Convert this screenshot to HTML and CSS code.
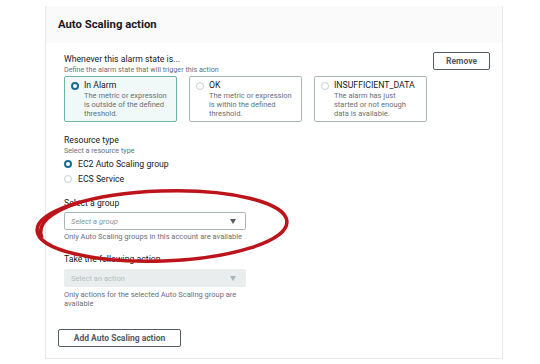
FILE: index.html
```html
<!DOCTYPE html>
<html lang="en">
<head>
    <meta charset="UTF-8">
    <meta name="viewport" content="width=device-width, initial-scale=1.0">
    <title>Auto Scaling action</title>
    <link rel="stylesheet" href="styles.css">
</head>
<body>
    <div class="panel">
        <div class="panel-header">
            <h2>Auto Scaling action</h2>
        </div>
        <div class="panel-body">
            <div class="fields">
                <div class="top-row">
                    <div class="form-group">
                        <div class="label first">Whenever this alarm state is...</div>
                        <div class="desc">Define the alarm state that will trigger this action</div>
                        <div class="cards">
                            <div class="card selected">
                                <span class="radio checked"></span>
                                <div class="card-text">
                                    <div class="card-title">In Alarm</div>
                                    <div class="card-desc">The metric or expression<br>is outside of the defined<br>threshold.</div>
                                </div>
                            </div>
                            <div class="card">
                                <span class="radio"></span>
                                <div class="card-text">
                                    <div class="card-title">OK</div>
                                    <div class="card-desc">The metric or expression<br>is within the defined<br>threshold.</div>
                                </div>
                            </div>
                            <div class="card">
                                <span class="radio"></span>
                                <div class="card-text">
                                    <div class="card-title">INSUFFICIENT_DATA</div>
                                    <div class="card-desc">The alarm has just<br>started or not enough<br>data is available.</div>
                                </div>
                            </div>
                        </div>
                    </div>
                    <button class="btn btn-remove">Remove</button>
                </div>

                <div class="label section">Resource type</div>
                <div class="desc">Select a resource type</div>
                <div class="radio-list">
                    <div class="radio-row"><span class="radio checked"></span>EC2 Auto Scaling group</div>
                    <div class="radio-row"><span class="radio"></span>ECS Service</div>
                </div>

                <div class="label group-label">Select a group</div>
                <div class="select">
                    <span class="placeholder">Select a group</span>
                    <span class="arrow"></span>
                </div>
                <div class="hint">Only Auto Scaling groups in this account are available</div>

                <div class="label section">Take the following action...</div>
                <div class="select disabled">
                    <span class="placeholder">Select an action</span>
                    <span class="arrow"></span>
                </div>
                <div class="hint hint-2">Only actions for the selected Auto Scaling group are<br>available</div>
            </div>

            <button class="btn btn-add">Add Auto Scaling action</button>
        </div>
    </div>

    <!-- red marker circle drawn over the screenshot -->
    <svg class="scribble" width="540" height="364" viewBox="0 0 540 364">
        <ellipse cx="162" cy="226" rx="125" ry="35" transform="rotate(-2 162 226)"></ellipse>
        <path d="M42 238 C 36 224, 50 212, 80 202"></path>
    </svg>
</body>
</html>
```
FILE: styles.css
```css
body {
    margin: 0;
    background: #fff;
    font-family: Roboto, "Liberation Sans", sans-serif;
    color: #16191f;
}

.panel {
    margin: 6px 0 0 45px;
    width: 458px;
    box-sizing: border-box;
    border: 1px solid #e6e9e9;
    border-top: none;
    background: #fff;
}

.panel-header {
    height: 37px;
    background: #fafafa;
    padding-left: 12px;
    display: flex;
    align-items: center;
}

.panel-header h2 {
    margin: 0;
    font-size: 11.3px;
    font-weight: bold;
    color: #16191f;
}

.panel-body {
    padding: 9px 12px 11px 12px;
}

.fields {
    padding-left: 6px;
}

.top-row {
    display: flex;
    justify-content: space-between;
    align-items: flex-start;
}

.label {
    font-size: 8.7px;
    line-height: 12px;
}

.label.first {
    margin-top: 1px;
}

.label.section {
    margin-top: 12px;
}

.label.group-label {
    margin-top: 11px;
}

.desc {
    font-size: 7.2px;
    line-height: 9px;
    color: #687078;
}

.cards {
    display: flex;
    gap: 12px;
    margin-top: 2px;
}

.card {
    width: 113px;
    height: 46px;
    box-sizing: border-box;
    border: 1px solid #aab7b8;
    border-radius: 2px;
    padding: 3px 4px 0 6px;
    display: flex;
    gap: 5px;
}

.card.selected {
    border-color: #6fb2a6;
    background: #f0f8f8;
}

.card .radio {
    margin-top: 2px;
}

.card-title {
    font-size: 8.7px;
    line-height: 11px;
}

.card-desc {
    font-size: 7.5px;
    line-height: 9px;
    color: #687078;
}

.radio {
    width: 8px;
    height: 8px;
    box-sizing: border-box;
    border: 1px solid #c6cfd0;
    border-radius: 50%;
    background: #fff;
    flex-shrink: 0;
}

.radio.checked {
    border: 2.5px solid #1b6a8f;
}

.radio-list {
    margin-top: 1px;
}

.radio-row {
    height: 15px;
    display: flex;
    align-items: center;
    gap: 6px;
    font-size: 8.7px;
}

.select {
    width: 182px;
    height: 18px;
    box-sizing: border-box;
    margin-top: 3px;
    border: 1px solid #aab7b8;
    border-radius: 2px;
    padding: 0 9px 0 6px;
    display: flex;
    align-items: center;
    justify-content: space-between;
}

.placeholder {
    font-size: 7.6px;
    font-style: italic;
    color: #879596;
}

.arrow {
    width: 0;
    height: 0;
    border-left: 3px solid transparent;
    border-right: 3px solid transparent;
    border-top: 5px solid #545b64;
}

.select.disabled {
    margin-top: 4px;
    background: #eaeded;
    border-color: #eaeded;
}

.select.disabled .placeholder {
    font-style: normal;
    color: #b4bebf;
}

.select.disabled .arrow {
    border-top-color: #aab7b8;
}

.hint {
    margin-top: 2px;
    font-size: 7.5px;
    line-height: 9px;
    color: #687078;
}

.hint-2 {
    margin-top: 3px;
}

.btn {
    height: 18px;
    box-sizing: border-box;
    border: 1px solid #545b64;
    border-radius: 2px;
    background: #fff;
    color: #545b64;
    font-family: inherit;
    font-size: 8.5px;
    font-weight: bold;
    padding: 0;
    cursor: pointer;
}

.btn-remove {
    width: 57px;
}

.btn-add {
    display: block;
    width: 123px;
    margin-top: 21px;
}

.scribble {
    position: absolute;
    left: 0;
    top: 0;
    pointer-events: none;
}

.scribble ellipse,
.scribble path {
    fill: none;
    stroke: #bd141b;
    stroke-width: 3.5;
}
```
